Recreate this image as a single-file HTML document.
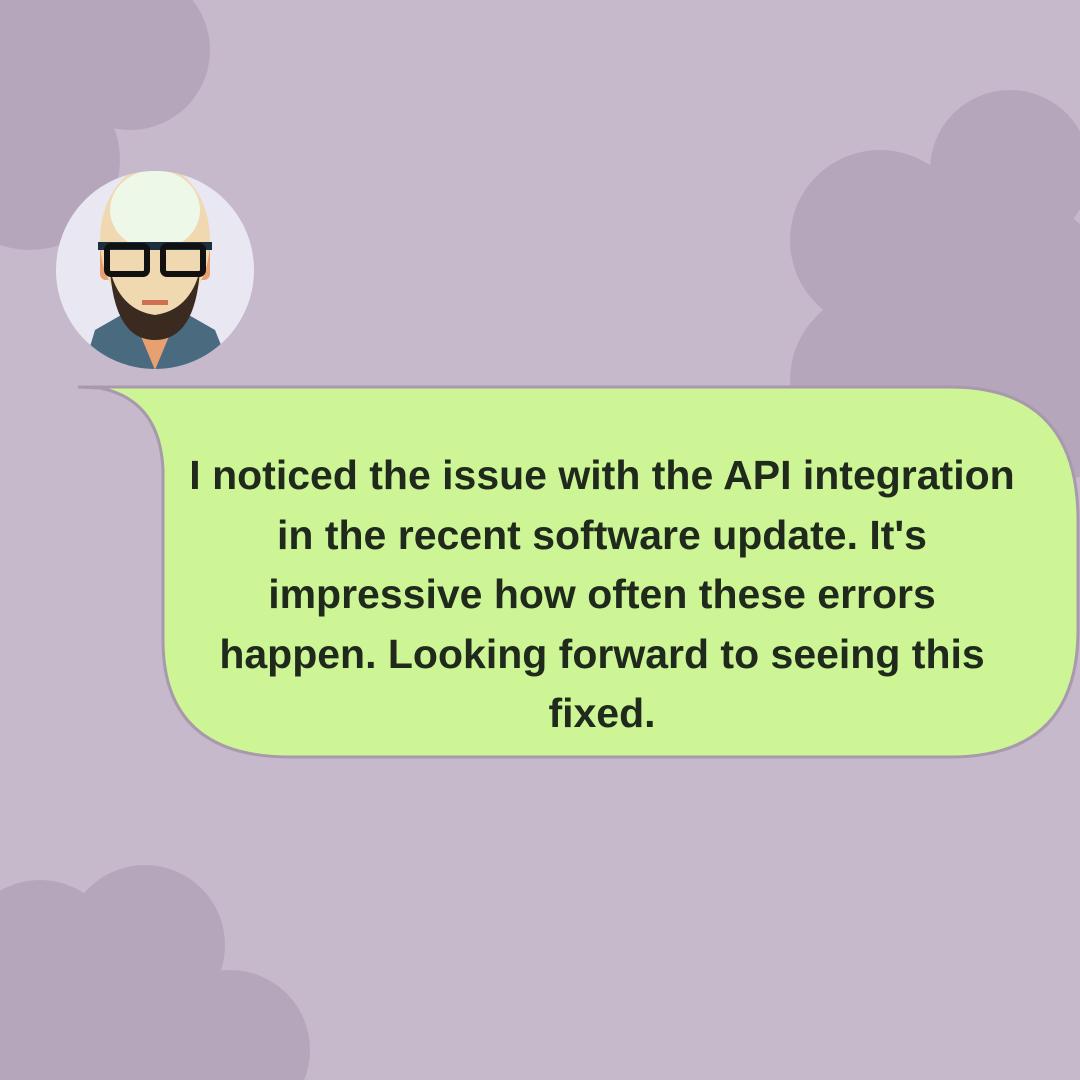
<!DOCTYPE html>
<html><head><style>
html,body{margin:0;padding:0;overflow:hidden;width:1080px;height:1080px}
body{background:#c6b9cc;position:relative;font-family:"Liberation Sans",sans-serif}
.t{position:absolute;left:102px;width:1000px;top:446px;text-align:center;font-weight:bold;font-size:41px;line-height:59.5px;color:#1f2a1c;white-space:nowrap;letter-spacing:0}
</style></head><body>
<svg width="1080" height="1080" style="position:absolute;left:0;top:0;overflow:hidden">
<g fill="#b5a6bc">
<circle cx="130" cy="50" r="80"/><circle cx="30" cy="160" r="90"/><circle cx="40" cy="40" r="100"/>
<circle cx="1010" cy="170" r="80"/><circle cx="880" cy="240" r="90"/><circle cx="1000" cy="300" r="110"/><circle cx="880" cy="380" r="90"/><circle cx="1060" cy="420" r="60"/>
<circle cx="145" cy="945" r="80"/><circle cx="40" cy="960" r="80"/><circle cx="230" cy="1050" r="80"/><circle cx="90" cy="1040" r="100"/>
</g>
<path d="M78,387 L950,387 Q1078,387 1078,520 L1078,630 Q1078,757 950,757 L290,757 Q163,757 163,640 L163,470 Q160,400 100,388 Z" fill="#cdf495" stroke="#a999ad" stroke-width="3"/>
<clipPath id="c"><circle cx="155" cy="270" r="99"/></clipPath>
<circle cx="155" cy="270" r="99" fill="#e9e8f2"/>
<g clip-path="url(#c)">
<path d="M80,380 L95,330 L130,310 L180,310 L215,330 L235,380 Z" fill="#4a6a80"/>
<path d="M130,310 L155,370 L180,310 Z" fill="#e8a070"/>
<rect x="100" y="240" width="14" height="40" rx="6" fill="#e8a070"/>
<rect x="196" y="240" width="14" height="40" rx="6" fill="#e8a070"/>
<ellipse cx="155" cy="240" rx="55" ry="75" fill="#f0d8b0"/>
<ellipse cx="155" cy="210" rx="45" ry="40" fill="#eef8e8"/>
<path d="M110,270 Q115,340 155,340 Q195,340 200,270 Q190,310 155,315 Q120,310 110,270Z" fill="#3a2a20"/>
<rect x="98" y="242" width="114" height="8" fill="#1a3040"/>
<rect x="107" y="246" width="40" height="28" rx="4" fill="none" stroke="#111" stroke-width="6"/>
<rect x="163" y="246" width="40" height="28" rx="4" fill="none" stroke="#111" stroke-width="6"/>
<rect x="142" y="300" width="26" height="5" fill="#d07050"/>
</g>
</svg>
<div class="t">I noticed the issue with the API integration<br>in the recent software update. It's<br>impressive how often these errors<br>happen. Looking forward to seeing this<br>fixed.</div>
</body></html>
